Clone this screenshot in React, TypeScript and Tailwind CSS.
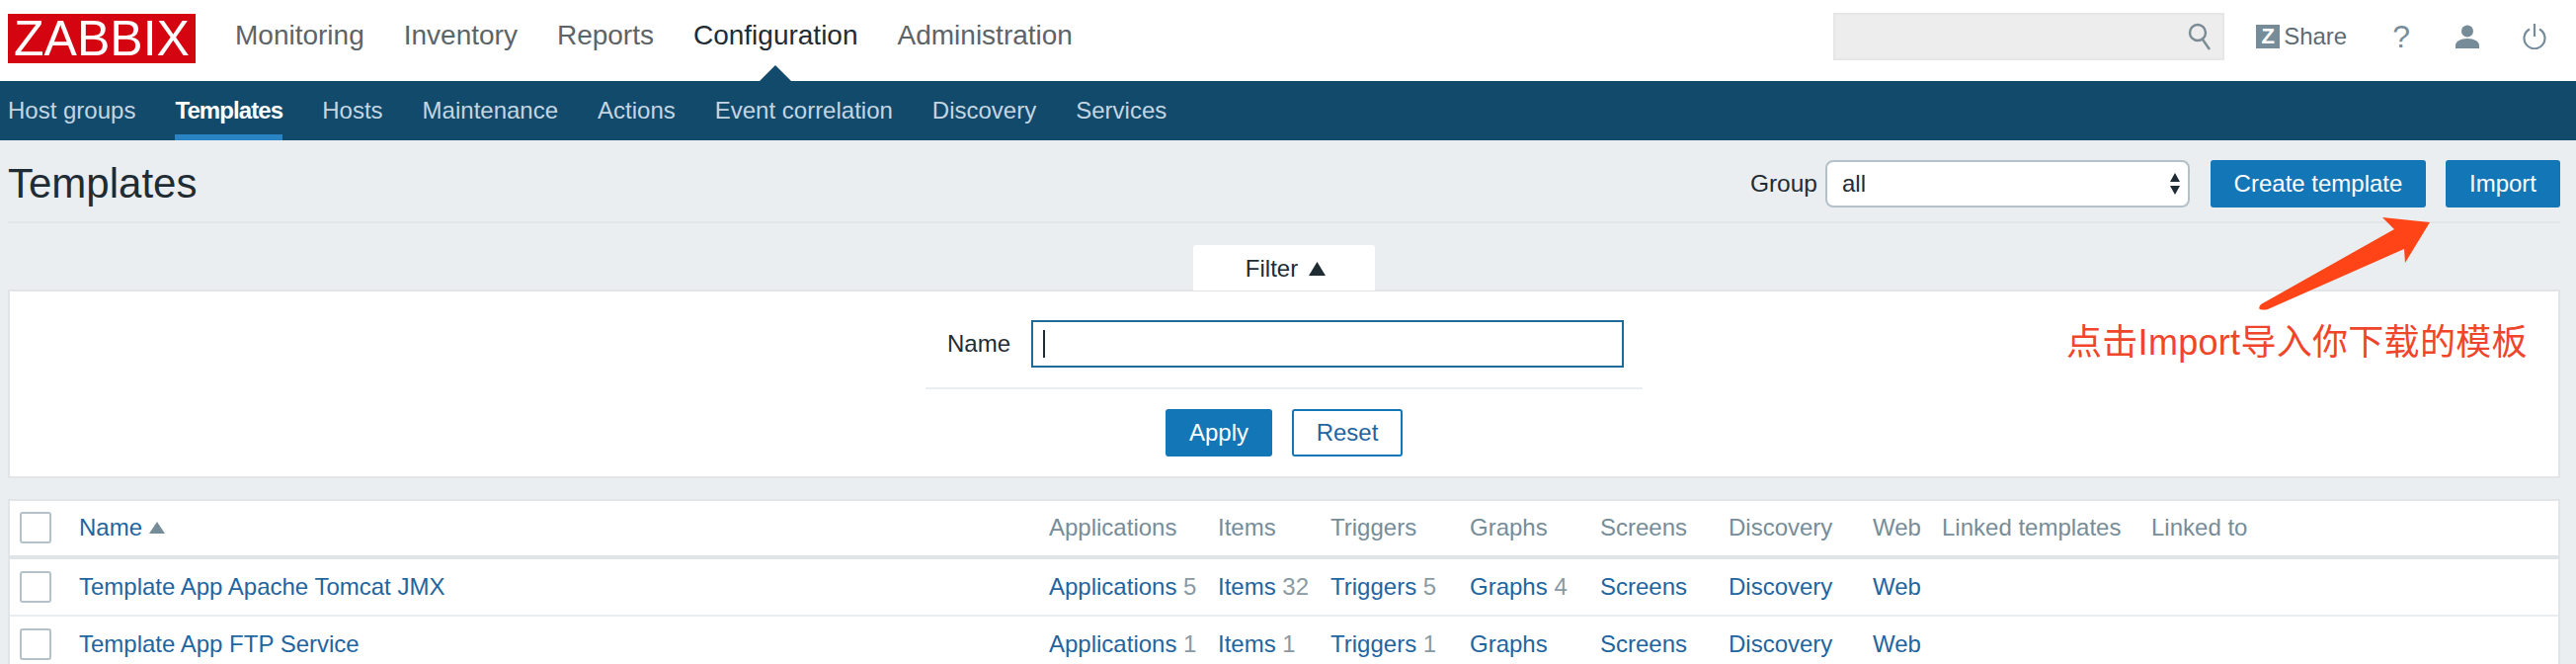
import React from "react";

const cols = "grid grid-cols-[60px_982px_171px_114px_141px_132px_130px_146px_70px_212px_1fr] items-center pl-[10px]";

function Check() {
  return <div className="w-8 h-8 rounded-[3px] border-2 border-[#b4c1c8] bg-white" />;
}

function Nav({ label, active }: { label: string; active?: boolean }) {
  return (
    <div className={"relative h-full flex items-center pb-[10px] text-[28px] " + (active ? "text-[#1f2c33]" : "text-[#5d6468]")}>
      {label}
      {active && (
        <div className="absolute left-1/2 -translate-x-1/2 bottom-0 w-0 h-0 border-x-[16px] border-x-transparent border-b-[16px] border-b-[#124a6b]" />
      )}
    </div>
  );
}

function Sub({ label, active }: { label: string; active?: boolean }) {
  return (
    <div className={"relative h-full flex items-center text-[24px] " + (active ? "text-white font-bold tracking-[-0.9px] border-b-[6px] border-[#2a83c2] pt-[6px]" : "text-[#c4d6e2]")}>
      {label}
    </div>
  );
}

function Row({ name, a, i, t, g }: { name: string; a: string; i: string; t: string; g?: string }) {
  const L = "text-[#1f65a0]";
  const N = "text-[#8a9aa3]";
  return (
    <div className={cols + " h-[58px] border-b-2 border-[#ebeef0] text-[24px]"}>
      <Check />
      <div className={L}>{name}</div>
      <div className={L}>Applications <span className={N}>{a}</span></div>
      <div className={L}>Items <span className={N}>{i}</span></div>
      <div className={L}>Triggers <span className={N}>{t}</span></div>
      <div className={L}>Graphs {g && <span className={N}>{g}</span>}</div>
      <div className={L}>Screens</div>
      <div className={L}>Discovery</div>
      <div className={L}>Web</div>
      <div />
      <div />
    </div>
  );
}

export default function App() {
  return (
    <div className="relative w-[2608px] h-[672px] overflow-hidden bg-[#ebeef0] font-['Liberation_Sans','Noto_Sans_CJK_SC',sans-serif] text-[24px] text-[#1f2c33]">
      {/* top bar */}
      <div className="h-[82px] bg-white flex items-center pl-2 pr-[30px]">
        <div className="w-[190px] h-[50px] bg-[#d40511] text-white text-[50px] leading-[50px] text-center mb-[4px]">ZABBIX</div>
        <div className="h-full flex gap-[40px] ml-[40px]">
          <Nav label="Monitoring" />
          <Nav label="Inventory" />
          <Nav label="Reports" />
          <Nav label="Configuration" active />
          <Nav label="Administration" />
        </div>
        <div className="ml-auto flex items-center mb-[8px]">
          <div className="w-[396px] h-[48px] bg-[#ededed] border-2 border-[#e6e6e6] flex items-center justify-end pr-[10px]">
            <svg width="26" height="30" viewBox="0 0 26 30" fill="none" stroke="#7b8b94" strokeWidth="2.4">
              <circle cx="11" cy="11" r="8" />
              <path d="M16 18l7 10" />
            </svg>
          </div>
          <div className="ml-[32px] w-[24px] h-[24px] bg-[#768d99] text-white text-[22px] leading-[24px] font-bold text-center">Z</div>
          <div className="ml-[4px] text-[24px] text-[#5d6b73]">Share</div>
          <div className="ml-[46px] text-[32px] leading-[36px] text-[#768d99]">?</div>
          <svg className="ml-[46px]" width="24" height="24" viewBox="0 0 24 24" fill="#768d99">
            <circle cx="12" cy="6.5" r="6" />
            <path d="M0 24v-3c0-4 5-7 12-7s12 3 12 7v3z" />
          </svg>
          <svg className="ml-[44px]" width="24" height="26" viewBox="0 0 24 26" fill="none" stroke="#768d99" strokeWidth="2.2">
            <path d="M7 5.5A10.5 10.5 0 1 0 17 5.5" />
            <path d="M12 0v13" />
          </svg>
        </div>
      </div>

      {/* sub bar */}
      <div className="h-[60px] bg-[#124a6b] flex items-stretch gap-[40px] pl-2">
        <Sub label="Host groups" />
        <Sub label="Templates" active />
        <Sub label="Hosts" />
        <Sub label="Maintenance" />
        <Sub label="Actions" />
        <Sub label="Event correlation" />
        <Sub label="Discovery" />
        <Sub label="Services" />
      </div>

      <div className="pl-2 pr-4">
        {/* heading */}
        <div className="h-[84px] border-b-2 border-[#e1e5e8] flex items-center">
          <h1 className="text-[42px] text-[#1f2c33] leading-none mt-[6px]">Templates</h1>
          <div className="ml-auto flex items-center mt-[6px]">
            <span className="text-[24.5px]">Group</span>
            <div className="ml-[8px] w-[369px] h-[48px] rounded-[8px] border-2 border-[#b4c1c8] bg-white flex items-center justify-between pl-[15px] pr-[7px]">
              <span>all</span>
              <svg width="12" height="24" viewBox="0 0 12 24" fill="#1f2c33">
                <path d="M6 1l5 9H1zM6 23l-5-9h10z" />
              </svg>
            </div>
            <div className="ml-[21px] w-[218px] h-[48px] rounded-[3px] bg-[#1376b7] text-white flex items-center justify-center">Create template</div>
            <div className="ml-[20px] w-[116px] h-[48px] rounded-[3px] bg-[#1376b7] text-white flex items-center justify-center">Import</div>
          </div>
        </div>

        {/* filter tab */}
        <div className="flex justify-center mt-[22px]">
          <div className="relative z-10 w-[184px] h-[46px] -mb-[1px] bg-white rounded-t-[3px] flex items-center justify-center gap-[11px] pl-[3px] pt-[2px]">
            <span>Filter</span>
            <svg width="17" height="14" viewBox="0 0 17 14" fill="#1f2c33"><path d="M8.5 0L17 14H0z" /></svg>
          </div>
        </div>

        {/* filter panel */}
        <div className="h-[191px] bg-white border-2 border-[#e1e5e8] pt-[29px]">
          <div className="w-[726px] mx-auto">
            <div className="flex items-center pl-[22px]">
              <span className="w-[85px]">Name</span>
              <div className="w-[600px] h-[48px] border-2 border-[#1f6a99] flex items-center pl-[10px]">
                <div className="w-[2px] h-[28px] bg-[#1f2c33]" />
              </div>
            </div>
            <div className="mt-[20px] border-t-2 border-[#ebeef0] pt-[20px] flex justify-center gap-[20px]">
              <div className="w-[108px] h-[48px] rounded-[3px] bg-[#1376b7] text-white flex items-center justify-center">Apply</div>
              <div className="w-[112px] h-[48px] rounded-[3px] border-2 border-[#1376b7] text-[#1f65a0] flex items-center justify-center">Reset</div>
            </div>
          </div>
        </div>

        {/* table */}
        <div className="mt-[21px] bg-white border-2 border-[#e1e5e8] border-b-0">
          <div className={cols + " h-[59px] pb-[2px] border-b-4 border-[#dfe4e7] text-[#768d99]"}>
            <Check />
            <div className="flex items-center gap-[7px] text-[#1f65a0]">
              Name
              <svg width="16" height="12" viewBox="0 0 16 12" fill="#768d99"><path d="M8 0l8 12H0z" /></svg>
            </div>
            <div>Applications</div>
            <div>Items</div>
            <div>Triggers</div>
            <div>Graphs</div>
            <div>Screens</div>
            <div>Discovery</div>
            <div>Web</div>
            <div>Linked templates</div>
            <div>Linked to</div>
          </div>
          <Row name="Template App Apache Tomcat JMX" a="5" i="32" t="5" g="4" />
          <Row name="Template App FTP Service" a="1" i="1" t="1" />
        </div>
      </div>

      {/* annotation */}
      <svg className="absolute left-[2280px] top-[215px]" width="190" height="105" viewBox="0 0 190 105" fill="#ff4517">
        <path d="M180 10L132 5L144 17L9 93Q6 97 8 98Q12 99 16 98L154 37L155 51z" />
      </svg>
      <div className="absolute left-[2092px] top-[325px] text-[36px] leading-[44px] text-[#f0452a] whitespace-nowrap tracking-[0.3px]">点击Import导入你下载的模板</div>
    </div>
  );
}
